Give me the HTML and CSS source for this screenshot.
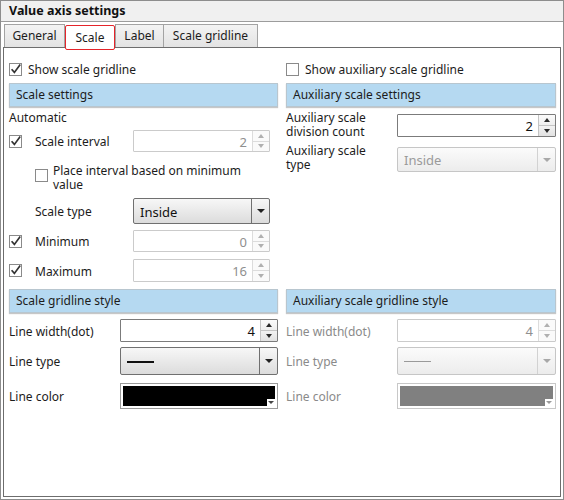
FILE: index.html
```html
<!DOCTYPE html>
<html lang="en">
<head>
<meta charset="utf-8">
<title>Value axis settings</title>
<link rel="stylesheet" href="styles.css">
</head>
<body>
<div class="window">
  <div class="titlebar">Value axis settings</div>
  <div class="body">
    <div class="tabs">
      <div class="tab t-general">General</div>
      <div class="tab t-scale active">Scale</div>
      <div class="tab t-label">Label</div>
      <div class="tab t-grid">Scale gridline</div>
    </div>
    <div class="panel">
      <div class="grid">
        <!-- scale settings -->
        <section class="col">
          <label class="check-row">
            <svg class="cb" viewBox="0 0 13 13"><rect x="0.5" y="0.5" width="12" height="12" fill="#fff" stroke="#8a8a8a"/><path d="M2.6 6.2 L5.4 9.4 L11.2 1.6" fill="none" stroke="#333" stroke-width="1.7"/></svg>
            <span>Show scale gridline</span>
          </label>
          <div class="header">Scale settings</div>
          <div class="auto">Automatic</div>
          <div class="row3 r-interval">
            <svg class="cb" viewBox="0 0 13 13"><rect x="0.5" y="0.5" width="12" height="12" fill="#fff" stroke="#8a8a8a"/><path d="M2.6 6.2 L5.4 9.4 L11.2 1.6" fill="none" stroke="#333" stroke-width="1.7"/></svg>
            <span class="lbl">Scale interval</span>
            <div class="spin disabled"><span class="val">2</span><span class="btns"><span class="up"></span><span class="down"></span></span></div>
          </div>
          <div class="place">
            <svg class="cb" viewBox="0 0 13 13"><rect x="0.5" y="0.5" width="12" height="12" fill="#fff" stroke="#8a8a8a"/></svg>
            <span>Place interval based on minimum value</span>
          </div>
          <div class="row3 r-type">
            <span></span>
            <span class="lbl">Scale type</span>
            <div class="combo"><span class="val">Inside</span><span class="arrow"></span></div>
          </div>
          <div class="row3 r-min">
            <svg class="cb" viewBox="0 0 13 13"><rect x="0.5" y="0.5" width="12" height="12" fill="#fff" stroke="#8a8a8a"/><path d="M2.6 6.2 L5.4 9.4 L11.2 1.6" fill="none" stroke="#333" stroke-width="1.7"/></svg>
            <span class="lbl">Minimum</span>
            <div class="spin disabled"><span class="val">0</span><span class="btns"><span class="up"></span><span class="down"></span></span></div>
          </div>
          <div class="row3 r-max">
            <svg class="cb" viewBox="0 0 13 13"><rect x="0.5" y="0.5" width="12" height="12" fill="#fff" stroke="#8a8a8a"/><path d="M2.6 6.2 L5.4 9.4 L11.2 1.6" fill="none" stroke="#333" stroke-width="1.7"/></svg>
            <span class="lbl">Maximum</span>
            <div class="spin disabled"><span class="val">16</span><span class="btns"><span class="up"></span><span class="down"></span></span></div>
          </div>
        </section>

        <!-- auxiliary scale settings -->
        <section class="col">
          <label class="check-row">
            <svg class="cb" viewBox="0 0 13 13"><rect x="0.5" y="0.5" width="12" height="12" fill="#fff" stroke="#8a8a8a"/></svg>
            <span>Show auxiliary scale gridline</span>
          </label>
          <div class="header">Auxiliary scale settings</div>
          <div class="row2 r-div">
            <span class="two">Auxiliary scale<br>division count</span>
            <div class="spin"><span class="val">2</span><span class="btns"><span class="up"></span><span class="down"></span></span></div>
          </div>
          <div class="row2 r-atype">
            <span class="two">Auxiliary scale<br>type</span>
            <div class="combo disabled"><span class="val">Inside</span><span class="arrow"></span></div>
          </div>
        </section>

        <!-- scale gridline style -->
        <section class="col">
          <div class="header">Scale gridline style</div>
          <div class="row2 r-lw">
            <span class="lbl">Line width(dot)</span>
            <div class="spin"><span class="val">4</span><span class="btns"><span class="up"></span><span class="down"></span></span></div>
          </div>
          <div class="row2 r-lt">
            <span class="lbl">Line type</span>
            <div class="combo"><span class="val"><i class="stroke"></i></span><span class="arrow"></span></div>
          </div>
          <div class="row2 r-lc">
            <span class="lbl">Line color</span>
            <div class="color"><span class="swatch"></span><span class="corner"></span></div>
          </div>
        </section>

        <!-- auxiliary scale gridline style -->
        <section class="col off">
          <div class="header">Auxiliary scale gridline style</div>
          <div class="row2 r-lw">
            <span class="lbl">Line width(dot)</span>
            <div class="spin disabled"><span class="val">4</span><span class="btns"><span class="up"></span><span class="down"></span></span></div>
          </div>
          <div class="row2 r-lt">
            <span class="lbl">Line type</span>
            <div class="combo disabled"><span class="val"><i class="stroke"></i></span><span class="arrow"></span></div>
          </div>
          <div class="row2 r-lc">
            <span class="lbl">Line color</span>
            <div class="color disabled"><span class="swatch"></span><span class="corner"></span></div>
          </div>
        </section>
      </div>
    </div>
  </div>
</div>
</body>
</html>
```
FILE: styles.css
```css
* { box-sizing: border-box; }

html, body {
  margin: 0;
  padding: 0;
  background: #fff;
}

body {
  font-family: "Noto Sans", "Open Sans", sans-serif;
  font-size: 12px;
  color: #1c1c1c;
}

.window {
  width: 564px;
  height: 500px;
  border: 1px solid #8d8d8d;
  display: flex;
  flex-direction: column;
  background: #fff;
}

.titlebar {
  height: 21px;
  background: #f0f0f0;
  border-bottom: 1px solid #9c9c9c;
  padding-left: 8px;
  font-weight: bold;
  font-size: 12.5px;
  line-height: 20px;
  color: #111;
}

.body {
  flex: 1;
  display: flex;
  flex-direction: column;
  padding: 2px 2px 2px 2px;
}

/* tab strip */
.tabs {
  display: flex;
  align-items: flex-start;
  padding-left: 1px;
  height: 23px;
}

.tab {
  height: 23px;
  border: 1px solid #a3a3a3;
  border-bottom: none;
  background: linear-gradient(#f3f3f3, #e3e3e3);
  text-align: center;
  line-height: 22px;
  margin-right: -1px;
  color: #1c1c1c;
}

.t-general { width: 61px; }
.t-scale { width: 51px; }
.t-label { width: 49px; }
.t-grid { width: 95px; }

.tab.active {
  position: relative;
  z-index: 2;
  height: 25px;
  margin-top: 1px;
  width: 50px;
  margin-left: 1px;
  margin-right: 0;
  background: #fff;
  border: 1px solid #e5242a;
  border-radius: 2px;
  line-height: 23px;
}

.panel {
  flex: 1;
  border: 1px solid #6d6d6d;
  padding: 13px 4px 0 5px;
}

.grid {
  display: grid;
  grid-template-columns: 269px 270px;
  column-gap: 8px;
  row-gap: 7px;
}

.col {
  display: flex;
  flex-direction: column;
}

/* checkbox rows */
.cb {
  width: 13px;
  height: 13px;
  display: block;
  flex: none;
}

.check-row {
  display: flex;
  align-items: center;
  gap: 6px;
  height: 16px;
}

.header {
  height: 24px;
  margin-top: 6px;
  background: #b5d9f1;
  border: 1px solid #b8c6cf;
  box-shadow: 0 1px 1px rgba(0, 0, 0, 0.22);
  padding-left: 6px;
  line-height: 22px;
  color: #1c1c1c;
}

.col:nth-child(n+3) .header { margin-top: 0; }

.auto {
  margin-top: 3px;
  height: 16px;
  line-height: 16px;
}

.lbl { padding-top: 1px; }

/* checkbox | label | control */
.row3 {
  display: grid;
  grid-template-columns: 26px 98px 137px;
  align-items: center;
}

.r-interval { margin-top: 4px; height: 22px; }
.r-type { margin-top: 8px; height: 26px; }
.r-min { margin-top: 6px; height: 22px; }
.r-max { margin-top: 7px; height: 23px; }

.row3 .spin { height: 22px; }
.r-max .spin { height: 23px; }
.r-type .combo { height: 26px; }

.place {
  margin-top: 12px;
  height: 26px;
  padding-left: 26px;
  display: flex;
  align-items: flex-start;
  gap: 5px;
  line-height: 13.5px;
}

.place .cb { margin-top: 5px; }
.place span { width: 200px; }

/* label | control */
.row2 {
  display: grid;
  grid-template-columns: 111px 158px;
  align-items: center;
}

.col:nth-child(even) .row2 { grid-template-columns: 111px 159px; }

.two { line-height: 14px; }

.r-div { margin-top: 4px; height: 28px; align-items: start; }
.r-div .spin { margin-top: 3px; height: 23px; }
.r-atype { margin-top: 5px; height: 28px; align-items: start; }
.r-atype .combo { margin-top: 3px; height: 25px; }

.r-lw { margin-top: 6px; height: 23px; }
.r-lw .spin { height: 23px; }
.r-lt { margin-top: 5px; height: 28px; }
.r-lt .combo { height: 28px; }
.r-lc { margin-top: 8px; height: 26px; }

.off .row2 > span { color: #8a8a8a; }

/* numeric spinner */
.spin {
  display: flex;
  border: 1px solid #7b7b7b;
  border-radius: 1px;
  background: #fff;
}

.spin .val {
  flex: 1;
  text-align: right;
  padding-right: 5px;
  padding-top: 1px;
  align-self: center;
  font-size: 13px;
  color: #111;
}

.spin .btns {
  width: 17px;
  border-left: 1px solid #c4c4c4;
  display: flex;
  flex-direction: column;
}

.spin .up,
.spin .down {
  flex: 1;
  display: flex;
  align-items: center;
  justify-content: center;
  background: linear-gradient(#fbfbfb, #eeeeee);
}

.spin .down {
  border-top: 1px solid #c4c4c4;
  background: linear-gradient(#f2f2f2, #e2e2e2);
}

.spin .up::before,
.spin .down::before {
  content: "";
  width: 0;
  height: 0;
  border-left: 3.5px solid transparent;
  border-right: 3.5px solid transparent;
}

.spin .up::before { border-bottom: 4px solid #2a2a2a; }
.spin .down::before { border-top: 4px solid #2a2a2a; }

.spin.disabled { border-color: #cbcbcb; }
.spin.disabled .val { color: #8f8f8f; }
.spin.disabled .btns { border-left-color: #dcdcdc; }
.spin.disabled .down { border-top-color: #dcdcdc; }
.spin.disabled .up,
.spin.disabled .down { background: #fafafa; }
.spin.disabled .up::before { border-bottom-color: #b0b0b0; }
.spin.disabled .down::before { border-top-color: #b0b0b0; }

/* drop-down */
.combo {
  display: flex;
  border: 1px solid #707070;
  border-radius: 2px;
  background: linear-gradient(#f7f7f7, #dcdcdc);
}

.combo .val {
  flex: 1;
  display: flex;
  align-items: center;
  padding-left: 6px;
  padding-top: 1px;
  font-size: 13px;
  color: #111;
}

.combo .arrow {
  width: 18px;
  border-left: 1px solid #707070;
  display: flex;
  align-items: center;
  justify-content: center;
}

.combo .arrow::before {
  content: "";
  width: 0;
  height: 0;
  border-left: 4px solid transparent;
  border-right: 4px solid transparent;
  border-top: 4px solid #222;
}

.combo .stroke {
  display: block;
  width: 27px;
  height: 2px;
  background: #111;
}

.combo.disabled {
  border-color: #c6c6c6;
  background: linear-gradient(#fbfbfb, #ececec);
}
.combo.disabled .val { color: #9a9a9a; }
.combo.disabled .arrow { border-left-color: #d2d2d2; }
.combo.disabled .arrow::before { border-top-color: #a8a8a8; }
.combo.disabled .stroke { background: #9a9a9a; height: 1.5px; }

/* colour picker */
.color {
  position: relative;
  height: 26px;
  border: 1px solid #9a9a9a;
  padding: 2px;
  background: #fff;
}

.color .swatch {
  display: block;
  height: 100%;
  background: #000;
}

.color .corner {
  position: absolute;
  right: 2px;
  bottom: 2px;
  width: 8px;
  height: 7px;
  background: #fff;
  display: flex;
  align-items: center;
  justify-content: center;
}

.color .corner::before {
  content: "";
  width: 0;
  height: 0;
  border-left: 3px solid transparent;
  border-right: 3px solid transparent;
  border-top: 3px solid #444;
}

.color.disabled { border-color: #c8c8c8; }
.color.disabled .swatch { background: #808080; }
.color.disabled .corner::before { border-top-color: #9a9a9a; }
```
